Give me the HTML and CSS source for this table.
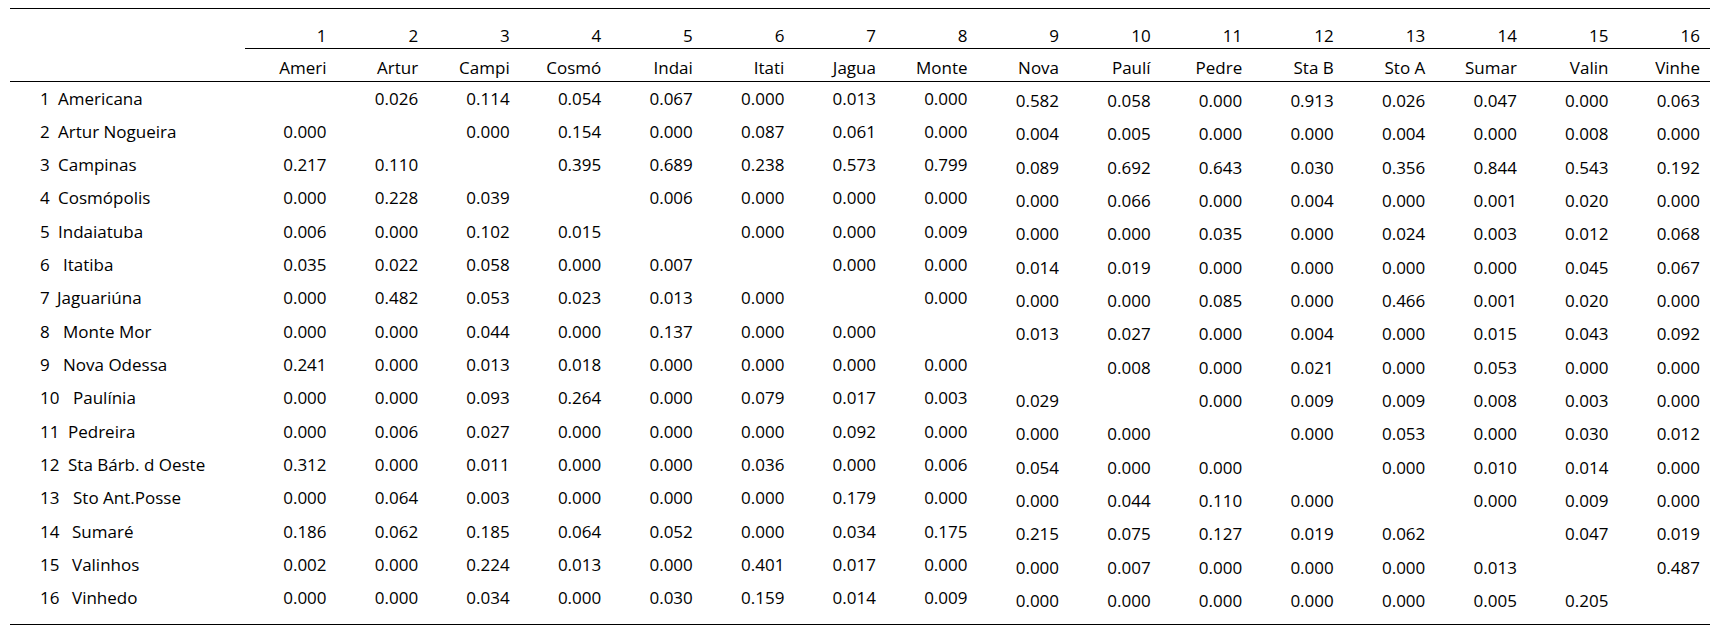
FILE: index.html
```html
<!DOCTYPE html>
<html lang="pt">

<head>
  <meta charset="UTF-8">
  <meta name="viewport" content="width=device-width, initial-scale=1.0">
  <title>Matriz</title>
  <link rel="stylesheet" href="styles.css">
</head>

<body>
  <table class="matrix">
    <colgroup>
      <col class="label-col">
      <col span="16">
    </colgroup>
    <thead>
      <tr class="nums">
        <th class="label"></th>
        <th>1</th><th>2</th><th>3</th><th>4</th><th>5</th><th>6</th><th>7</th><th>8</th>
        <th>9</th><th>10</th><th>11</th><th>12</th><th>13</th><th>14</th><th>15</th><th>16</th>
      </tr>
      <tr class="names">
        <th class="label"></th>
        <th>Ameri</th><th>Artur</th><th>Campi</th><th>Cosmó</th><th>Indai</th><th>Itati</th><th>Jagua</th><th>Monte</th>
        <th>Nova</th><th>Paulí</th><th>Pedre</th><th>Sta B</th><th>Sto A</th><th>Sumar</th><th>Valin</th><th>Vinhe</th>
      </tr>
    </thead>
    <tbody>
      <tr>
        <td class="label"><span class="n w18">1</span>Americana</td>
        <td></td><td>0.026</td><td>0.114</td><td>0.054</td><td>0.067</td><td>0.000</td><td>0.013</td><td>0.000</td>
        <td>0.582</td><td>0.058</td><td>0.000</td><td>0.913</td><td>0.026</td><td>0.047</td><td>0.000</td><td>0.063</td>
      </tr>
      <tr>
        <td class="label"><span class="n w18">2</span>Artur Nogueira</td>
        <td>0.000</td><td></td><td>0.000</td><td>0.154</td><td>0.000</td><td>0.087</td><td>0.061</td><td>0.000</td>
        <td>0.004</td><td>0.005</td><td>0.000</td><td>0.000</td><td>0.004</td><td>0.000</td><td>0.008</td><td>0.000</td>
      </tr>
      <tr>
        <td class="label"><span class="n w18">3</span>Campinas</td>
        <td>0.217</td><td>0.110</td><td></td><td>0.395</td><td>0.689</td><td>0.238</td><td>0.573</td><td>0.799</td>
        <td>0.089</td><td>0.692</td><td>0.643</td><td>0.030</td><td>0.356</td><td>0.844</td><td>0.543</td><td>0.192</td>
      </tr>
      <tr>
        <td class="label"><span class="n w18">4</span>Cosmópolis</td>
        <td>0.000</td><td>0.228</td><td>0.039</td><td></td><td>0.006</td><td>0.000</td><td>0.000</td><td>0.000</td>
        <td>0.000</td><td>0.066</td><td>0.000</td><td>0.004</td><td>0.000</td><td>0.001</td><td>0.020</td><td>0.000</td>
      </tr>
      <tr>
        <td class="label"><span class="n w18">5</span>Indaiatuba</td>
        <td>0.006</td><td>0.000</td><td>0.102</td><td>0.015</td><td></td><td>0.000</td><td>0.000</td><td>0.009</td>
        <td>0.000</td><td>0.000</td><td>0.035</td><td>0.000</td><td>0.024</td><td>0.003</td><td>0.012</td><td>0.068</td>
      </tr>
      <tr>
        <td class="label"><span class="n w23">6</span>Itatiba</td>
        <td>0.035</td><td>0.022</td><td>0.058</td><td>0.000</td><td>0.007</td><td></td><td>0.000</td><td>0.000</td>
        <td>0.014</td><td>0.019</td><td>0.000</td><td>0.000</td><td>0.000</td><td>0.000</td><td>0.045</td><td>0.067</td>
      </tr>
      <tr>
        <td class="label"><span class="n w17">7</span>Jaguariúna</td>
        <td>0.000</td><td>0.482</td><td>0.053</td><td>0.023</td><td>0.013</td><td>0.000</td><td></td><td>0.000</td>
        <td>0.000</td><td>0.000</td><td>0.085</td><td>0.000</td><td>0.466</td><td>0.001</td><td>0.020</td><td>0.000</td>
      </tr>
      <tr>
        <td class="label"><span class="n w23">8</span>Monte Mor</td>
        <td>0.000</td><td>0.000</td><td>0.044</td><td>0.000</td><td>0.137</td><td>0.000</td><td>0.000</td><td></td>
        <td>0.013</td><td>0.027</td><td>0.000</td><td>0.004</td><td>0.000</td><td>0.015</td><td>0.043</td><td>0.092</td>
      </tr>
      <tr>
        <td class="label"><span class="n w23">9</span>Nova Odessa</td>
        <td>0.241</td><td>0.000</td><td>0.013</td><td>0.018</td><td>0.000</td><td>0.000</td><td>0.000</td><td>0.000</td>
        <td></td><td>0.008</td><td>0.000</td><td>0.021</td><td>0.000</td><td>0.053</td><td>0.000</td><td>0.000</td>
      </tr>
      <tr>
        <td class="label"><span class="n w33">10</span>Paulínia</td>
        <td>0.000</td><td>0.000</td><td>0.093</td><td>0.264</td><td>0.000</td><td>0.079</td><td>0.017</td><td>0.003</td>
        <td>0.029</td><td></td><td>0.000</td><td>0.009</td><td>0.009</td><td>0.008</td><td>0.003</td><td>0.000</td>
      </tr>
      <tr>
        <td class="label"><span class="n w28">11</span>Pedreira</td>
        <td>0.000</td><td>0.006</td><td>0.027</td><td>0.000</td><td>0.000</td><td>0.000</td><td>0.092</td><td>0.000</td>
        <td>0.000</td><td>0.000</td><td></td><td>0.000</td><td>0.053</td><td>0.000</td><td>0.030</td><td>0.012</td>
      </tr>
      <tr>
        <td class="label"><span class="n w28">12</span>Sta Bárb. d Oeste</td>
        <td>0.312</td><td>0.000</td><td>0.011</td><td>0.000</td><td>0.000</td><td>0.036</td><td>0.000</td><td>0.006</td>
        <td>0.054</td><td>0.000</td><td>0.000</td><td></td><td>0.000</td><td>0.010</td><td>0.014</td><td>0.000</td>
      </tr>
      <tr>
        <td class="label"><span class="n w33">13</span>Sto Ant.Posse</td>
        <td>0.000</td><td>0.064</td><td>0.003</td><td>0.000</td><td>0.000</td><td>0.000</td><td>0.179</td><td>0.000</td>
        <td>0.000</td><td>0.044</td><td>0.110</td><td>0.000</td><td></td><td>0.000</td><td>0.009</td><td>0.000</td>
      </tr>
      <tr>
        <td class="label"><span class="n w32">14</span>Sumaré</td>
        <td>0.186</td><td>0.062</td><td>0.185</td><td>0.064</td><td>0.052</td><td>0.000</td><td>0.034</td><td>0.175</td>
        <td>0.215</td><td>0.075</td><td>0.127</td><td>0.019</td><td>0.062</td><td></td><td>0.047</td><td>0.019</td>
      </tr>
      <tr>
        <td class="label"><span class="n w32">15</span>Valinhos</td>
        <td>0.002</td><td>0.000</td><td>0.224</td><td>0.013</td><td>0.000</td><td>0.401</td><td>0.017</td><td>0.000</td>
        <td>0.000</td><td>0.007</td><td>0.000</td><td>0.000</td><td>0.000</td><td>0.013</td><td></td><td>0.487</td>
      </tr>
      <tr class="last">
        <td class="label"><span class="n w32">16</span>Vinhedo</td>
        <td>0.000</td><td>0.000</td><td>0.034</td><td>0.000</td><td>0.030</td><td>0.159</td><td>0.014</td><td>0.009</td>
        <td>0.000</td><td>0.000</td><td>0.000</td><td>0.000</td><td>0.000</td><td>0.005</td><td>0.205</td><td></td>
      </tr>
    </tbody>
  </table>
</body>

</html>
```

FILE: styles.css
```css
body {
  margin: 8px 12px 0 10px;
  background-color: #fff;
  color: #000;
  font-family: "Open Sans", "Noto Sans", sans-serif;
  font-size: 17px;
  font-weight: 500;
}

.matrix {
  width: 1700px;
  table-layout: fixed;
  border-collapse: collapse;
  border-top: 1px solid #000;
  border-bottom: 1px solid #000;
}

.matrix .label-col {
  width: 235px;
}

.matrix th,
.matrix td {
  padding: 0 10px 0 0;
  line-height: 23px;
  font-weight: inherit;
  text-align: right;
  white-space: nowrap;
  vertical-align: top;
}

/* header rows */
.nums th {
  padding-top: 14.5px;
  padding-bottom: 1.5px;
  border-bottom: 1px solid #000;
}

.nums th.label {
  border-bottom: none;
}

.names th {
  padding-top: 7px;
  padding-bottom: 2px;
  border-bottom: 1px solid #000;
}

/* body rows */
.matrix td {
  padding-top: 4.5px;
  padding-bottom: 5.83px;
}

/* columns 9..16 sit a little lower in the original */
.matrix td:nth-child(n+10) {
  padding-top: 7px;
  padding-bottom: 3.33px;
}

.matrix tr.last td {
  padding-bottom: 14.3px;
}

.matrix tr.last td:nth-child(n+10) {
  padding-bottom: 11.8px;
}

.matrix .label {
  text-align: left;
  padding-left: 30px;
}

.label .n {
  display: inline-block;
}

.w17 { width: 17px; }
.w18 { width: 18px; }
.w23 { width: 23px; }
.w28 { width: 28px; }
.w32 { width: 32px; }
.w33 { width: 33px; }
```
